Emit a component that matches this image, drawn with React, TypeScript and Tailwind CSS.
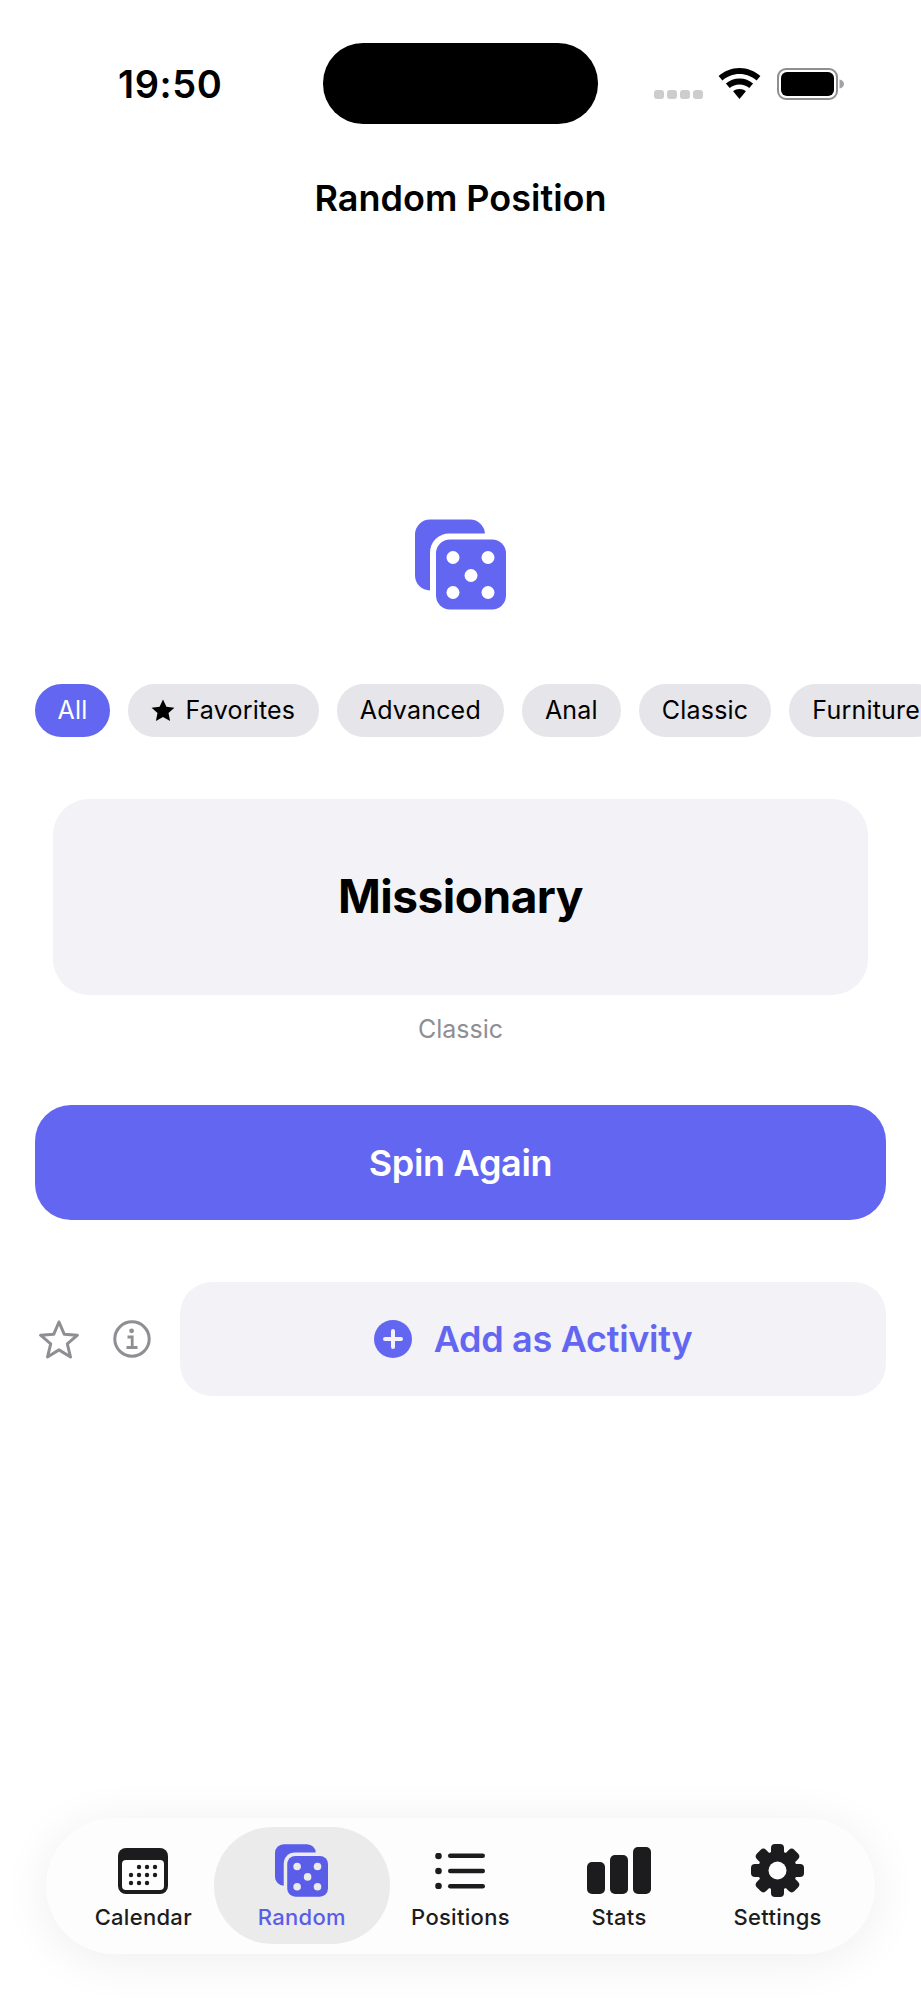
import React from "react";

const INDIGO = "#6366f1";
const INK = "#1c1c1e";

function Dice({ size, color, gap }: { size: number; color: string; gap: string }) {
  return (
    <svg width={size} height={size} viewBox="0 0 91 90">
      <rect x="0" y="0" width="70" height="71" rx="15" fill={color} />
      <rect x="15" y="14" width="76" height="76" rx="19" fill={gap} />
      <rect x="21" y="20" width="70" height="70" rx="14" fill={color} />
      <g fill={gap}>
        <circle cx="38" cy="38" r="6.5" />
        <circle cx="73" cy="38" r="6.5" />
        <circle cx="56" cy="56" r="6.5" />
        <circle cx="38" cy="73" r="6.5" />
        <circle cx="73" cy="73" r="6.5" />
      </g>
    </svg>
  );
}

function CalendarIcon() {
  const dots = [
    [21, 19], [29, 19], [37, 19],
    [13, 27], [21, 27], [29, 27], [37, 27],
    [13, 35], [21, 35], [29, 35],
  ];
  return (
    <svg width="50" height="46" viewBox="0 0 50 46">
      <rect width="50" height="46" rx="8" fill={INK} />
      <rect x="4" y="12" width="42" height="30" rx="4" fill="#fdfdfd" />
      {dots.map(([x, y]) => (
        <circle key={`${x}-${y}`} cx={x} cy={y} r="2.2" fill={INK} />
      ))}
    </svg>
  );
}

function ListIcon() {
  return (
    <svg width="50" height="36" viewBox="0 0 50 36" fill={INK}>
      <circle cx="3.5" cy="3" r="3.3" />
      <circle cx="3.5" cy="18" r="3.3" />
      <circle cx="3.5" cy="33" r="3.3" />
      <rect x="13" y="0.5" width="37" height="4.6" rx="2.3" />
      <rect x="13" y="15.7" width="37" height="4.6" rx="2.3" />
      <rect x="13" y="30.9" width="37" height="4.6" rx="2.3" />
    </svg>
  );
}

function StatsIcon() {
  return (
    <svg width="64" height="47" viewBox="0 0 64 47" fill={INK}>
      <rect x="0" y="15" width="18" height="32" rx="5" />
      <rect x="23" y="8" width="18" height="39" rx="5" />
      <rect x="46" y="0" width="18" height="47" rx="5" />
    </svg>
  );
}

function GearIcon() {
  const angles = [0, 45, 90, 135, 180, 225, 270, 315];
  return (
    <svg width="53" height="53" viewBox="0 0 53 53">
      <circle cx="26.5" cy="26.5" r="19.5" fill={INK} />
      {angles.map((a) => (
        <rect key={a} x="20" y="0" width="13" height="14" rx="4" fill={INK} transform={`rotate(${a} 26.5 26.5)`} />
      ))}
      <circle cx="26.5" cy="26.5" r="9" fill="#fdfdfd" />
    </svg>
  );
}

function Wifi() {
  return (
    <svg width="43" height="31" viewBox="0 0 43 31" fill="#000">
      <path d="M21.5 0C13.5 0 6.2 3 0.6 8.1L4.4 12.6C9 8.6 15 6.1 21.5 6.1S34 8.6 38.6 12.6L42.4 8.1C36.8 3 29.5 0 21.5 0Z" />
      <path d="M21.5 10.4C16.3 10.4 11.6 12.3 7.9 15.5L11.7 20C14.4 17.8 17.8 16.5 21.5 16.5S28.6 17.8 31.3 20L35.1 15.5C31.4 12.3 26.7 10.4 21.5 10.4Z" />
      <path d="M21.5 21C19 21 16.9 21.8 15.1 23.2L21.5 31L27.9 23.2C26.1 21.8 24 21 21.5 21Z" />
    </svg>
  );
}

function Battery() {
  return (
    <svg width="67" height="32" viewBox="0 0 67 32">
      <rect x="1" y="1" width="59" height="30" rx="8" fill="none" stroke="#8e8e93" strokeWidth="2" />
      <rect x="4" y="4" width="53" height="24" rx="6" fill="#000" />
      <path d="M62.5 11.5C65 12 67 13.5 67 16S65 20 62.5 20.5Z" fill="#a2a2a6" />
    </svg>
  );
}

const tabs = [
  { label: "Calendar", icon: <CalendarIcon /> },
  { label: "Random", icon: <Dice size={53} color="#5a5de8" gap="#ebebeb" />, active: true },
  { label: "Positions", icon: <ListIcon /> },
  { label: "Stats", icon: <StatsIcon /> },
  { label: "Settings", icon: <GearIcon /> },
];

const filters = ["Advanced", "Anal", "Classic", "Furniture"];

export default function App() {
  return (
    <div className="relative flex h-[2000px] w-[921px] flex-col overflow-hidden bg-white font-['Inter',sans-serif] text-black">
      {/* status bar */}
      <div className="flex items-center pt-[43px]">
        <div className="w-[323px] pl-[118px] text-[38px] leading-[46px] font-semibold tracking-[0.6px]">19:50</div>
        <div className="h-[81px] w-[275px] rounded-[40px] bg-black" />
        <div className="ml-[56px] flex items-center">
          <div className="mt-[22px] flex gap-[3px]">
            <span className="h-[9px] w-[10px] rounded-[3px] bg-[#cdcdcd]" />
            <span className="h-[9px] w-[10px] rounded-[3px] bg-[#cdcdcd]" />
            <span className="h-[9px] w-[10px] rounded-[3px] bg-[#cdcdcd]" />
            <span className="h-[9px] w-[10px] rounded-[3px] bg-[#cdcdcd]" />
          </div>
          <div className="ml-[15px] flex">
            <Wifi />
          </div>
          <div className="ml-[16px] flex">
            <Battery />
          </div>
        </div>
      </div>

      <h1 className="mt-[50px] text-center text-[36px] leading-[48px] font-semibold">Random Position</h1>

      <div className="mt-[297px] flex justify-center">
        <Dice size={91} color={INDIGO} gap="#ffffff" />
      </div>

      {/* filters */}
      <div className="mt-[74px] flex gap-[18px] overflow-hidden pl-[35px] text-[25px] leading-[53px] tracking-[0.2px]">
        <div className="h-[53px] shrink-0 rounded-full bg-[#6366f1] px-[22.5px] text-white">All</div>
        <div className="flex h-[53px] shrink-0 items-center gap-[10px] rounded-full bg-[#e5e5ea] px-[23.5px]">
          <svg width="24" height="23" viewBox="0 0 24 23" fill="#000">
            <path d="M12 0.5L15.4 7.7L23.4 8.7L17.5 14.1L19.1 22L12 18.1L4.9 22L6.5 14.1L0.6 8.7L8.6 7.7Z" />
          </svg>
          <span>Favorites</span>
        </div>
        {filters.map((f) => (
          <div key={f} className="h-[53px] shrink-0 rounded-full bg-[#e5e5ea] px-[23px]">
            {f}
          </div>
        ))}
      </div>

      {/* result */}
      <div className="mx-[53px] mt-[62px] flex h-[196px] items-center justify-center rounded-[36px] bg-[#f2f2f7] pb-[2px] text-[46px] font-bold tracking-[-0.5px]">
        Missionary
      </div>
      <div className="mt-[17px] text-center text-[25px] leading-[34px] text-[#8e8e93]">Classic</div>

      <div className="mx-[35px] mt-[59px] flex h-[115px] items-center justify-center rounded-[36px] bg-[#6366f1] text-[36px] font-semibold tracking-[-0.3px] text-white">
        Spin Again
      </div>

      {/* actions */}
      <div className="mt-[62px] flex h-[114px] items-center pr-[35px] pl-[39px]">
        <svg width="40" height="39" viewBox="0 0 40 39" fill="none" stroke="#8e8e93" strokeWidth="3" strokeLinejoin="round">
          <path d="M20 2L25.2 14.2L38.4 15.2L28.3 23.8L31.5 37L20 29.9L8.5 37L11.7 23.8L1.6 15.2L14.8 14.2Z" />
        </svg>
        <svg className="ml-[34px]" width="38" height="38" viewBox="0 0 38 38" fill="none" stroke="#8e8e93" strokeWidth="3">
          <circle cx="19" cy="19" r="17.2" />
          <circle cx="18.6" cy="10.8" r="2.4" fill="#8e8e93" stroke="none" />
          <path d="M14.5 17H19.2V27M13.5 27.5H24.5" strokeWidth="2.8" />
        </svg>
        <div className="ml-[29px] flex h-full flex-1 items-center justify-center gap-[22px] rounded-[32px] bg-[#f2f2f7] text-[36px] font-semibold tracking-[-0.3px] text-[#6366f1]">
          <svg width="38" height="38" viewBox="0 0 38 38">
            <circle cx="19" cy="19" r="19" fill={INDIGO} />
            <path d="M19 11V27M11 19H27" stroke="#f2f2f7" strokeWidth="4" strokeLinecap="round" />
          </svg>
          <span>Add as Activity</span>
        </div>
      </div>

      {/* tab bar */}
      <div className="mx-[46px] mt-[422px] grid h-[136px] grid-cols-5 rounded-[68px] bg-[#fdfdfd] px-[18px] pt-[9px] pb-[10px] shadow-[0_6px_50px_rgba(0,0,0,0.07)]">
        {tabs.map((t) => (
          <div
            key={t.label}
            className={
              t.active
                ? "-mx-[9px] flex flex-col items-center rounded-[58px] bg-[#ebebeb] pt-[17px] text-[#5a5de8]"
                : "flex flex-col items-center pt-[17px] text-[#1c1c1e]"
            }
          >
            <div className="flex h-[53px] items-center justify-center">{t.icon}</div>
            <div className="mt-[6px] text-[22px] leading-[28px] font-medium tracking-[0.3px]">{t.label}</div>
          </div>
        ))}
      </div>
    </div>
  );
}
